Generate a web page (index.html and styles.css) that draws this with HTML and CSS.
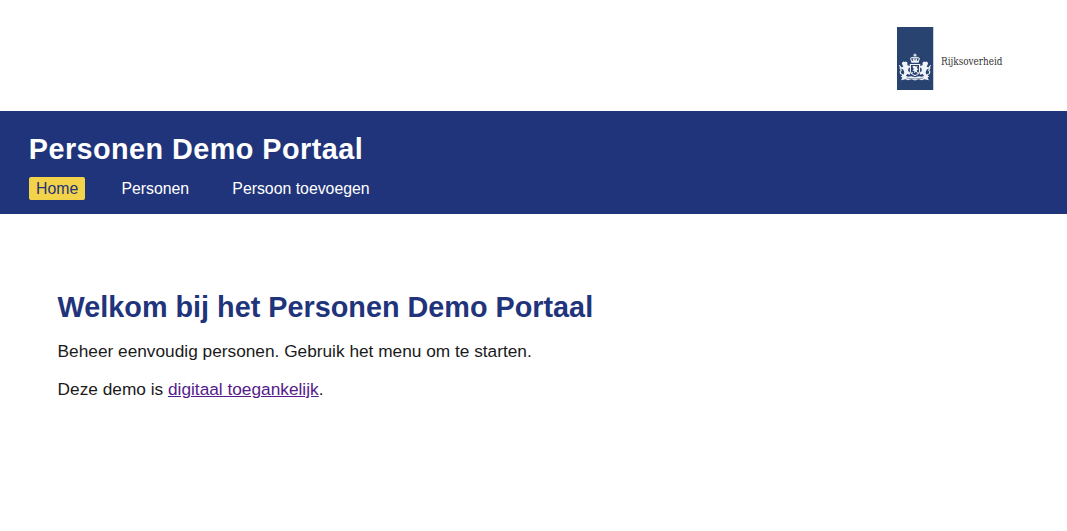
FILE: index.html
```html
<!DOCTYPE html>
<html lang="nl">
<head>
<meta charset="utf-8">
<title>Personen Demo Portaal</title>
<link rel="stylesheet" href="styles.css">
</head>
<body>
<div class="brand">
  <svg class="logo" width="140" height="63" viewBox="0 0 140 63" role="img" aria-label="Rijksoverheid">
    <rect class="logo-edge" x="36" width="1" height="63"/>
    <rect class="logo-blue" width="36" height="63"/>
    <g class="arms" transform="translate(-1.1 -1.5) scale(1.06 1.04)">
      <path d="M17.5 27h1v1h1v1h-1v1h-1v-1h-1v-1h1z"/>
      <path class="arms-line" d="M14.8 34.5L13.9 31.8Q15 29.8 17.8 31Q20.8 29.8 22.1 31.8L21.2 34.5ZM16 31.5l1 2.4M18 30.5v3.4M20 31.5l-1 2.4"/>
      <path d="M14.5 34.3h7v1.5h-7zM13 37h10v1H13z"/>
      <path class="arms-line" d="M13.7 38v6.5Q14.5 47 18 48.3Q21.5 47 22.3 44.5V38"/>
      <path d="M15.5 39.5l2-.8 1.2.8 1.8-.6-.7 2 1.5 1.4-1.5.5.5 2.8-1.4-1.2-1.7 1.6.2-2.2-2-.5 1.6-1.3zM15 45h1.2v1H15zM20 45h1v1h-1z"/>
      <g id="lion">
        <path d="M5.6 36l1.4-1.3 1.3.3 1.3-.5 1.3 1.3-.2 2 1.3 1.4 2-1 .3 1.2-2.5 2-.3 2.3 2.2 1.7-.4 2-2.6-.8-1.6 2.4H5.4l.3-1.2 1.5-.7.7-2.1-1-2.7-1.9-.7-1.1-1.7 1.6.2 1.5-.4-.9-2z"/>
        <path class="arms-line" d="M7 47.5l-2.6-1.2-.4-2 1.1-1.3-1.2-1.9.5-1.6-1.4-1.1M8.8 40.5l3.3-1.8"/>
      </g>
      <use href="#lion" transform="matrix(-1 0 0 1 36 0)"/>
      <path d="M4.5 48.8l4-.8 3 1.2 3-.5 3.5 1.1 3.5-1.1 3 .5 3-1.2 4 .8-1.6 1.4 1.3 2.4-4.2-.9-2.5 1-3-.9-3.5 1.1-3.5-1.1-3 .9-2.5-1-4.2.9 1.3-2.4z"/>
      <path class="arms-gap" d="M10 50.5q4 .8 8 .8t8-.8"/>
    </g>
    <text class="logo-text" x="44" y="38" textLength="61.5" lengthAdjust="spacingAndGlyphs">Rijksoverheid</text>
  </svg>
</div>
<header class="header">
  <div class="title">Personen Demo Portaal</div>
  <nav class="nav">
    <a class="nav-link active">Home</a>
    <a class="nav-link">Personen</a>
    <a class="nav-link">Persoon toevoegen</a>
  </nav>
</header>
<main class="main">
  <h1 class="heading">Welkom bij het Personen Demo Portaal</h1>
  <p class="text">Beheer eenvoudig personen. Gebruik het menu om te starten.</p>
  <p class="text">Deze demo is <a class="link" href="#">digitaal toegankelijk</a>.</p>
</main>
</body>
</html>
```

FILE: styles.css
```css
body { margin: 0; background: #fff; color: #1a1a1a; font-family: Arial, "Liberation Sans", sans-serif; }
.brand { display: flex; justify-content: flex-end; box-sizing: border-box; height: 111px; padding: 27px 30px 0 0; }
.logo { display: block; }
.logo-blue { fill: #294370; }
.logo-edge { fill: #cbd1dc; }
.arms { fill: #f0f3f7; }
.arms-line { fill: none; stroke: #f0f3f7; stroke-width: 1; }
.arms-gap { fill: none; stroke: #294370; stroke-width: .5; }
.logo-text { font: 10.5px "DejaVu Serif Condensed", "DejaVu Serif", serif; fill: #333; }
.header { box-sizing: border-box; height: 103px; padding: 22px 28.8px 0; background: #1f347a; color: #fff; }
.title { font-size: 28.8px; line-height: 33px; font-weight: 700; letter-spacing: .45px; }
.nav { display: flex; gap: 28.8px; margin-top: 11px; }
.nav-link { padding: 0 7.2px; border-radius: 2px; font-size: 15.84px; line-height: 23px; color: #fff; }
.active { background: #f3d34a; color: #1f347a; }
.main { padding: 76px 57.6px 0; }
.heading { margin: 0; font-size: 28.8px; line-height: 34px; color: #1f347a; }
.text { margin: 0; padding-top: 18px; font-size: 17.28px; line-height: 20px; }
.heading + .text { padding-top: 17px; }
.link { color: #551a8b; }
```
